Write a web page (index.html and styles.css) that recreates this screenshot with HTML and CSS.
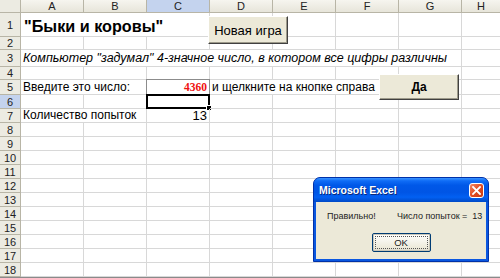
FILE: index.html
```html
<!DOCTYPE html>
<html lang="ru">
<head>
<meta charset="utf-8">
<title>Быки и коровы</title>
<link rel="stylesheet" href="styles.css">
</head>
<body>
<div class="sheet">
  <div class="grid">
    <div class="corner"></div>
    <div class="ch">A</div><div class="ch">B</div><div class="ch sel">C</div><div class="ch">D</div><div class="ch">E</div><div class="ch">F</div><div class="ch">G</div><div class="ch last">H</div>

    <div class="rh">1</div>
    <div class="c span3 title">"Быки и коровы"</div><div class="c"></div><div class="c"></div><div class="c"></div><div class="c"></div><div class="c last"></div>

    <div class="rh">2</div>
    <div class="c"></div><div class="c"></div><div class="c"></div><div class="c"></div><div class="c"></div><div class="c"></div><div class="c"></div><div class="c last"></div>

    <div class="rh">3</div>
    <div class="c span7 italic">Компьютер "задумал" 4-значное число, в котором все цифры различны</div><div class="c last"></div>

    <div class="rh">4</div>
    <div class="c"></div><div class="c"></div><div class="c"></div><div class="c"></div><div class="c"></div><div class="c"></div><div class="c"></div><div class="c last"></div>

    <div class="rh">5</div>
    <div class="c span2">Введите это число:</div><div class="c input"><span class="guess">4360</span></div><div class="c span3">и щелкните на кнопке справа</div><div class="c"></div><div class="c last"></div>

    <div class="rh selh">6</div>
    <div class="c"></div><div class="c"></div><div class="c active"><span class="handle"></span></div><div class="c"></div><div class="c"></div><div class="c"></div><div class="c"></div><div class="c last"></div>

    <div class="rh">7</div>
    <div class="c span2">Количество попыток</div><div class="c num">13</div><div class="c"></div><div class="c"></div><div class="c"></div><div class="c"></div><div class="c last"></div>

    <div class="rh">8</div><div class="c"></div><div class="c"></div><div class="c"></div><div class="c"></div><div class="c"></div><div class="c"></div><div class="c"></div><div class="c last"></div>
    <div class="rh">9</div><div class="c"></div><div class="c"></div><div class="c"></div><div class="c"></div><div class="c"></div><div class="c"></div><div class="c"></div><div class="c last"></div>
    <div class="rh">10</div><div class="c"></div><div class="c"></div><div class="c"></div><div class="c"></div><div class="c"></div><div class="c"></div><div class="c"></div><div class="c last"></div>
    <div class="rh">11</div><div class="c"></div><div class="c"></div><div class="c"></div><div class="c"></div><div class="c"></div><div class="c"></div><div class="c"></div><div class="c last"></div>
    <div class="rh">12</div><div class="c"></div><div class="c"></div><div class="c"></div><div class="c"></div><div class="c"></div><div class="c"></div><div class="c"></div><div class="c last"></div>
    <div class="rh">13</div><div class="c"></div><div class="c"></div><div class="c"></div><div class="c"></div><div class="c"></div><div class="c"></div><div class="c"></div><div class="c last"></div>
    <div class="rh">14</div><div class="c"></div><div class="c"></div><div class="c"></div><div class="c"></div><div class="c"></div><div class="c"></div><div class="c"></div><div class="c last"></div>
    <div class="rh">15</div><div class="c"></div><div class="c"></div><div class="c"></div><div class="c"></div><div class="c"></div><div class="c"></div><div class="c"></div><div class="c last"></div>
    <div class="rh">16</div><div class="c"></div><div class="c"></div><div class="c"></div><div class="c"></div><div class="c"></div><div class="c"></div><div class="c"></div><div class="c last"></div>
    <div class="rh">17</div><div class="c"></div><div class="c"></div><div class="c"></div><div class="c"></div><div class="c"></div><div class="c"></div><div class="c"></div><div class="c last"></div>
    <div class="rh">18</div><div class="c"></div><div class="c"></div><div class="c"></div><div class="c"></div><div class="c"></div><div class="c"></div><div class="c"></div><div class="c last"></div>
  </div>
  <div class="bottom-edge"></div>

  <button class="btn btn-new">Новая игра</button>
  <button class="btn btn-yes">Да</button>

  <div class="dialog">
    <div class="titlebar">
      <span class="title-text">Microsoft Excel</span>
      <span class="close">
        <svg width="9" height="9" viewBox="0 0 9 9"><path d="M1 1 L8 8 M8 1 L1 8" stroke="#fff" stroke-width="1.8" stroke-linecap="square"/></svg>
      </span>
    </div>
    <div class="dbody">
      <div class="msg"><span class="right-word">Правильно!</span><span class="count">Число попыток =  13</span></div>
      <div class="ok"><span class="focus">OK</span></div>
    </div>
  </div>
</div>
</body>
</html>
```

FILE: styles.css
```css
* { box-sizing: border-box; }
html, body { margin: 0; padding: 0; background: #fff; }
body {
  font-family: "Liberation Sans", Arial, sans-serif;
  font-size: 12px;
  color: #000;
  width: 500px;
  height: 278px;
  overflow: hidden;
}
.sheet { position: relative; width: 500px; height: 278px; }

.grid {
  display: grid;
  grid-template-columns: 21px repeat(7, 63px) 38px;
  grid-template-rows: 13px 24px 13px 17px 13px 15px 14px repeat(12, 14px);
}

.corner, .ch, .rh {
  background: #ecebe2;
  border-right: 1px solid #b8b5a6;
  border-bottom: 1px solid #b8b5a6;
  color: #222;
  font-size: 11px;
  display: flex;
  align-items: center;
  justify-content: center;
  line-height: 1;
}
.ch { background: linear-gradient(#f6f5ef, #e7e5da); }
.ch.last { border-right: none; }
.ch.sel, .rh.selh { background: #c4d3ee; }
.rh { justify-content: center; padding-top: 1px; }

.c {
  border-right: 1px solid #d8d8d8;
  border-bottom: 1px solid #d8d8d8;
  display: flex;
  align-items: flex-end;
  padding: 0 2px 0 2px;
  white-space: nowrap;
  line-height: 13px;
  position: relative;
}
.c.last { border-right: none; }
.span2 { grid-column: span 2; }
.span3 { grid-column: span 3; }
.span7 { grid-column: span 7; }

.title {
  font-weight: bold;
  font-size: 16.2px;
  line-height: 20px;
  padding-left: 3px;
}
.italic { font-style: italic; font-size: 12.5px; padding-bottom: 1px; }

.input {
  border: 1px solid #8c8c8c;
  margin: -1px 0 0 -1px;
  justify-content: flex-end;
}
.guess {
  font-family: "Liberation Serif", "Times New Roman", serif;
  font-weight: bold;
  font-size: 11.5px;
  color: #f01010;
}
.active {
  border: 2px solid #000;
  margin: -1px 0 0 -1px;
}
.handle {
  position: absolute;
  right: -3px;
  bottom: -3px;
  width: 5px;
  height: 5px;
  background: #000;
  border-left: 1px solid #fff;
  border-top: 1px solid #fff;
}
.num { justify-content: flex-end; font-size: 13px; }

.bottom-edge { height: 1px; background: #8a8a8a; }

.btn {
  position: absolute;
  margin: 0;
  padding: 0;
  background: #ece9d8;
  font-family: "Liberation Sans", Arial, sans-serif;
  color: #000;
  border: 1px solid;
  border-color: #fff #404040 #404040 #fff;
  box-shadow: inset -1px -1px 0 #9d9a8a;
}
.btn-new { left: 208px; top: 16px; width: 80px; height: 28px; font-size: 13px; }
.btn-yes { left: 379px; top: 74px; width: 80px; height: 26px; font-size: 12px; font-weight: bold; }

.dialog {
  position: absolute;
  left: 313px;
  top: 177px;
  width: 176px;
  height: 85px;
  background: #0a57e0;
  border-radius: 7px 7px 0 0;
  border: 1px solid #0031a8;
  display: flex;
  flex-direction: column;
  padding: 0 2px 2px 2px;
  font-family: "Liberation Sans", Arial, sans-serif;
}
.titlebar {
  height: 24px;
  margin: 0 -2px;
  padding: 0 4px 0 5px;
  border-radius: 6px 6px 0 0;
  background: linear-gradient(#3a93ff 0%, #0f6cf6 12%, #0058e8 30%, #0055e5 60%, #0260f2 80%, #0049c6 100%);
  display: flex;
  align-items: center;
  justify-content: space-between;
}
.title-text {
  color: #fff;
  font-weight: bold;
  font-size: 10.5px;
  text-shadow: 1px 1px 0 #0a2a7a;
}
.close {
  width: 15px;
  height: 15px;
  border: 1px solid #fff;
  border-radius: 3px;
  background: linear-gradient(135deg, #f08a6a, #e14b22 50%, #c63a14);
  display: flex;
  align-items: center;
  justify-content: center;
}
.dbody {
  flex: 1;
  background: #ece9d8;
  display: flex;
  flex-direction: column;
  align-items: center;
  font-size: 9px;
  color: #222;
}
.msg {
  align-self: stretch;
  display: flex;
  padding: 9px 0 0 11px;
  height: 31px;
}
.msg .right-word { width: 70px; }
.msg .count { white-space: pre; }
.ok {
  width: 59px;
  height: 19px;
  border: 1px solid #003c74;
  border-radius: 2px;
  background: linear-gradient(#fff, #ece9d8 85%, #d6d0c5);
  box-shadow: inset 0 0 0 1px #c9c6b8;
  display: flex;
  padding: 2px;
}
.focus {
  flex: 1;
  border: 1px dotted #555;
  display: flex;
  align-items: center;
  justify-content: center;
  font-size: 9.5px;
}
```
